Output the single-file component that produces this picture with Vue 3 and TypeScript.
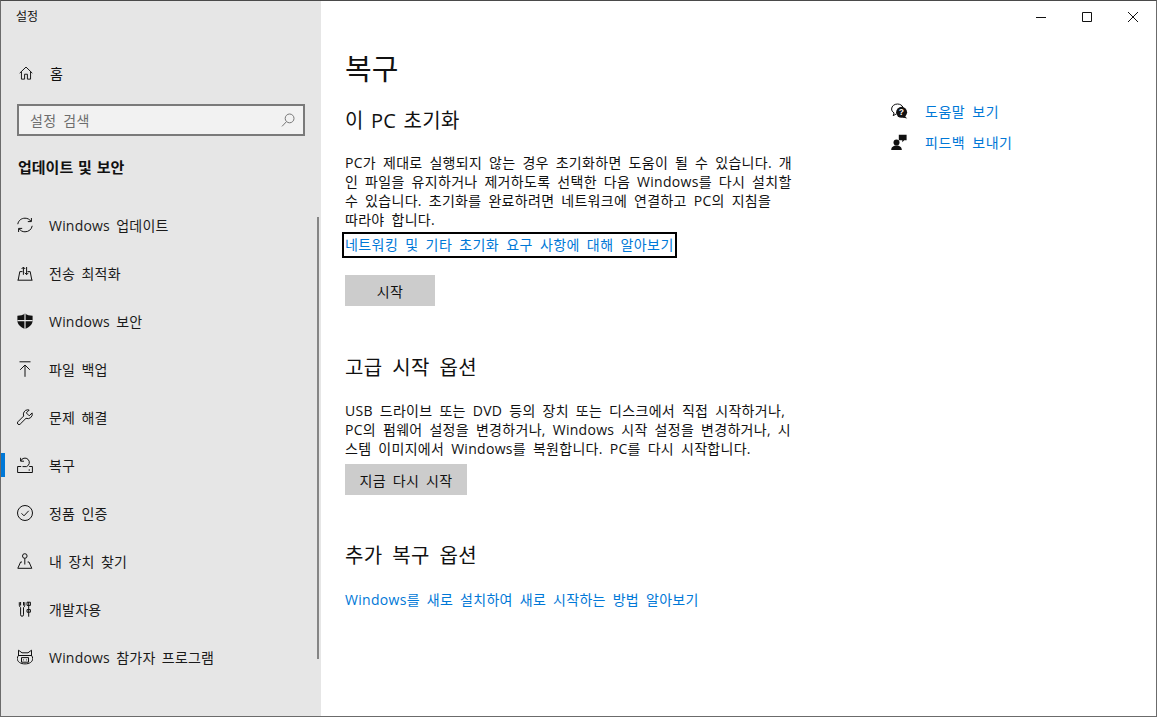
<script setup lang="ts">
interface NavItem { label: string; icon: string; active?: boolean }
const nav: NavItem[] = [
  { label: 'Windows 업데이트', icon: 'update' },
  { label: '전송 최적화', icon: 'delivery' },
  { label: 'Windows 보안', icon: 'shield' },
  { label: '파일 백업', icon: 'backup' },
  { label: '문제 해결', icon: 'wrench' },
  { label: '복구', icon: 'recovery', active: true },
  { label: '정품 인증', icon: 'check' },
  { label: '내 장치 찾기', icon: 'find' },
  { label: '개발자용', icon: 'dev' },
  { label: 'Windows 참가자 프로그램', icon: 'cat' },
]
const para1 = [
  'PC가 제대로 실행되지 않는 경우 초기화하면 도움이 될 수 있습니다. 개',
  '인 파일을 유지하거나 제거하도록 선택한 다음 Windows를 다시 설치할',
  '수 있습니다. 초기화를 완료하려면 네트워크에 연결하고 PC의 지침을',
  '따라야 합니다.',
]
const para2 = [
  'USB 드라이브 또는 DVD 등의 장치 또는 디스크에서 직접 시작하거나,',
  'PC의 펌웨어 설정을 변경하거나, Windows 시작 설정을 변경하거나, 시',
  '스템 이미지에서 Windows를 복원합니다. PC를 다시 시작합니다.',
]
</script>

<template>
  <div class="window">
    <aside class="sidebar">
      <div class="app-title">설정</div>
      <div class="home">
        <svg class="home-ico" viewBox="0 0 16 16" fill="none" stroke="#111" stroke-width="1.100">
          <path d="M.8 8.200 8 1.200l7.200 7M2.800 6.600v8.400h3.600V9.400h3.200V15h3.600V6.600" />
        </svg>
        <span class="home-label">홈</span>
      </div>
      <div class="search">
        <span class="search-text">설정 검색</span>
        <svg class="search-ico" viewBox="0 0 14 14" fill="none" stroke="#777" stroke-width="1">
          <circle cx="8.600" cy="5.400" r="4.400" />
          <path d="M5.500 8.600 1 13.400" />
        </svg>
      </div>
      <div class="group">업데이트 및 보안</div>
      <nav class="nav">
        <div v-for="item in nav" :key="item.label" class="nav-item">
          <span v-if="item.active" class="marker"></span>
          <svg class="ico" viewBox="0 0 16 16" fill="none" stroke="#111" stroke-width="1">
            <template v-if="item.icon === 'update'">
              <path d="M.8 7.200C1.300 3.600 4.300 1.200 8 1.200c2.500 0 4.600 1.100 5.900 3" />
              <path d="M15.200 8.800c-.5 3.600-3.500 6-7.200 6-2.500 0-4.600-1.100-5.900-3" />
              <path d="M14.400 1v3.600h-3.600M1.600 15v-3.600h3.600" />
            </template>
            <template v-else-if="item.icon === 'delivery'">
              <path d="M.5 15.200h15M1.200 15l1.600-8.400h2.700M10.500 6.600h2.700l1.600 8.400" />
              <path d="M6.400 9.800V2.200M4.600 4l1.800-1.900L8.200 4M9.600 2v7.600M7.800 7.800l1.800 1.900 1.800-1.900" />
            </template>
            <template v-else-if="item.icon === 'shield'">
              <path fill="#111" stroke="none" d="M8 .4c2 1.400 4.600 2.200 7.600 2.300v5c0 3.700-3.100 6.500-7.600 8.300C3.500 14.200.4 11.400.4 7.700v-5C3.400 2.600 6 1.800 8 .4Z" />
              <path stroke="#e6e6e6" stroke-width="1.200" d="M8 .4V16M.4 7.600h15.200" />
            </template>
            <template v-else-if="item.icon === 'backup'">
              <path d="M2.500 .8h11M8 15.800V4M3.200 8.800 8 4l4.800 4.800" />
            </template>
            <template v-else-if="item.icon === 'wrench'">
              <path d="M10.700.8a4.500 4.500 0 0 0-4 6.200L.9 12.800a1.600 1.600 0 0 0 2.300 2.300L9 9.300a4.500 4.500 0 0 0 6.100-5.400l-2.900 2.900-2.900-2.900 2.900-2.900a4.500 4.500 0 0 0-1.500-.2Z" />
            </template>
            <template v-else-if="item.icon === 'recovery'">
              <path d="M.6 9.500v6h14.800v-6h-3.200M.6 9.500h3.600M11.600 13H13" />
              <path d="M3.600 .8v3.400H7M3.800 4A4.400 4.400 0 1 1 9.500 9.600H5.500" />
            </template>
            <template v-else-if="item.icon === 'check'">
              <circle cx="8" cy="8" r="7.500" />
              <path d="M4.500 8.300 7 10.800l4.700-5" />
            </template>
            <template v-else-if="item.icon === 'find'">
              <circle cx="7.800" cy="3" r="2.300" />
              <path d="M7.800 5.300v6.200M5 9H3.600L.8 15.300h14L12 9h-1.400" />
            </template>
            <template v-else-if="item.icon === 'dev'">
              <path d="M2.300 1.200v3c0 1.200.7 2 1.300 2.300v7.300a1.400 1.400 0 0 0 2.900 0V6.500c.7-.3 1.300-1.100 1.300-2.300v-3M3.600 1v3.500M6.500 1v3.500" />
              <path d="M11.700 1v14.700M10 1.200h3.400v3.200H10zM10 8.600h3.400v2.600H10z" />
            </template>
            <template v-else>
              <path d="M1.500 1.200 5 3.800h6l3.500-2.600v5.200c.8 1 1.200 2 1.200 3.200 0 3.300-3.300 5.300-7.700 5.300S.3 12.900.3 9.600c0-1.200.4-2.200 1.200-3.200Z" />
              <path d="M4.500 8.600h7v4.600h-7zM6 10.900h.8M9.200 10.900h.8M1 6.500h14" />
            </template>
          </svg>
          <span class="nav-label">{{ item.label }}</span>
        </div>
      </nav>
      <span class="scroll-thumb"></span>
    </aside>

    <main class="main">
      <div class="win-controls">
        <svg viewBox="0 0 10 10" fill="none" stroke="#111" stroke-width="1"><path d="M0 5.500h10" /></svg>
        <svg viewBox="0 0 10 10" fill="none" stroke="#111" stroke-width="1"><path d="M.5.500h9v9h-9z" /></svg>
        <svg viewBox="0 0 10 10" fill="none" stroke="#111" stroke-width="1"><path d="m0 0 10 10M10 0 0 10" /></svg>
      </div>
      <div class="columns">
        <section class="content">
          <h1 class="page-title">복구</h1>
          <h2 class="heading first">이 PC 초기화</h2>
          <p class="para p1"><span v-for="l in para1" :key="l" class="line">{{ l }}</span></p>
          <a class="link focused">네트워킹 및 기타 초기화 요구 사항에 대해 알아보기</a>
          <button class="btn start">시작</button>
          <h2 class="heading second">고급 시작 옵션</h2>
          <p class="para p2"><span v-for="l in para2" :key="l" class="line">{{ l }}</span></p>
          <button class="btn restart">지금 다시 시작</button>
          <h2 class="heading third">추가 복구 옵션</h2>
          <a class="link fresh">Windows를 새로 설치하여 새로 시작하는 방법 알아보기</a>
        </section>
        <section class="help">
          <div class="help-row">
            <svg class="help-ico" viewBox="0 0 17 16">
              <path fill="none" stroke="#111" stroke-width="1" d="M5.500 10.800 2.200 12.700l.9-2.800C1.400 8.900.6 7.500.6 6 .6 3.100 3.300 1 6.500 1c2.500 0 4.700 1.300 5.500 3.300" />
              <circle cx="10.600" cy="9.300" r="5.500" fill="#111" />
              <path fill="#111" d="m13.500 13 2.800 2.500-5-1Z" />
              <text x="10.600" y="12.300" font-size="8.500" font-weight="700" text-anchor="middle" fill="#fff" font-family="Liberation Sans, sans-serif">?</text>
            </svg>
            <a class="help-link">도움말 보기</a>
          </div>
          <div class="help-row">
            <svg class="help-ico" viewBox="0 0 17 16">
              <circle cx="5.500" cy="8.600" r="3" fill="#111" />
              <path fill="#111" d="M.2 16c0-2.800 2.200-4.400 5.300-4.400s5.300 1.600 5.300 4.400Z" />
              <path fill="#111" d="M7.800.8h7.800v5.400h-2.400l-1.900 2V6.200H7.800Z" />
            </svg>
            <a class="help-link">피드백 보내기</a>
          </div>
        </section>
      </div>
    </main>
  </div>
</template>

<style scoped>
.window {
  box-sizing: border-box;
  width: 1157px;
  height: 717px;
  display: flex;
  border: 1px solid #6b6b6b;
  border-top-color: #4a4a4a;
  background: #fff;
  color: #111;
  font-family: "Open Sans", "Noto Sans CJK KR", sans-serif;
  font-size: 14px;
  letter-spacing: 0.3px;
  word-spacing: 3px;
  overflow: hidden;
}
.sidebar {
  position: relative;
  width: 320px;
  flex: none;
  background: #e6e6e6;
}
.app-title {
  font-size: 12px;
  line-height: 16px;
  letter-spacing: 0;
  margin: 8px 0 0 15px;
}
.home {
  display: flex;
  align-items: center;
  height: 24px;
  margin-top: 36px;
  padding-left: 18px;
}
.home-ico {
  width: 14px;
  height: 14px;
  flex: none;
}
.ico {
  width: 16px;
  height: 16px;
  flex: none;
}
.home-label {
  margin-left: 17px;
}
.search {
  box-sizing: border-box;
  display: flex;
  align-items: center;
  justify-content: space-between;
  width: 288px;
  height: 32px;
  margin: 19px 0 0 16px;
  padding: 0 8px 0 11px;
  background: #f2f2f2;
  border: 2px solid #7a7a7a;
  color: #6d6d6d;
}
.search-ico {
  width: 14px;
  height: 14px;
}
.group {
  font-size: 15px;
  font-weight: 700;
  line-height: 22px;
  letter-spacing: 0;
  word-spacing: 1px;
  margin: 20px 0 0 17px;
}
.nav {
  margin-top: 23px;
}
.nav-item {
  position: relative;
  display: flex;
  align-items: center;
  height: 48px;
  padding-left: 16px;
}
.nav-label {
  margin-left: 16px;
  color: #1a1a1a;
  white-space: nowrap;
  letter-spacing: 0.2px;
  word-spacing: 2.500px;
}
.marker {
  position: absolute;
  left: 0;
  top: 12px;
  width: 4px;
  height: 24px;
  background: #0078d7;
}
.scroll-thumb {
  position: absolute;
  left: 316px;
  top: 216px;
  width: 2px;
  height: 442px;
  background: #858585;
}
.main {
  position: relative;
  flex: 1;
  min-width: 0;
}
.win-controls {
  position: absolute;
  top: 11px;
  right: 18px;
  display: flex;
  gap: 36px;
}
.win-controls svg {
  width: 10px;
  height: 10px;
}
.columns {
  display: flex;
}
.content {
  width: 545px;
  flex: none;
  padding-left: 24px;
}
.page-title {
  font-size: 29px;
  font-weight: 400;
  line-height: 40px;
  letter-spacing: 0;
  margin: 48px 0 0;
}
.heading {
  font-size: 20px;
  font-weight: 400;
  line-height: 28px;
  letter-spacing: 0.4px;
  word-spacing: 4px;
  margin: 0;
}
.heading.first {
  margin-top: 18px;
  word-spacing: 1.500px;
}
.heading.second { margin-top: 48px; }
.heading.third { margin-top: 47px; }
.para {
  margin: 0;
  line-height: 19px;
  color: #111;
}
.p1 { margin-top: 18px; }
.p2 { margin-top: 19px; }
.line {
  display: block;
  white-space: nowrap;
}
.link {
  display: block;
  color: #0078d7;
  line-height: 20px;
  white-space: nowrap;
}
.focused {
  box-sizing: border-box;
  width: 335px;
  height: 26px;
  margin: 3px 0 0 -3px;
  padding-left: 1px;
  border: 2px solid #000;
  line-height: 22px;
  letter-spacing: 0.420px;
}
.fresh { margin-top: 20px; }
.btn {
  display: block;
  height: 31px;
  padding: 0;
  border: 0;
  background: #ccc;
  color: #111;
  font: inherit;
  letter-spacing: inherit;
  word-spacing: inherit;
}
.start {
  width: 90px;
  margin-top: 17px;
}
.restart {
  width: 122px;
  margin-top: 6px;
}
.help {
  padding: 94px 0 0 1px;
}
.help-row {
  display: flex;
  align-items: center;
  height: 31px;
}
.help-ico {
  width: 17px;
  height: 16px;
  flex: none;
}
.help-link {
  margin-left: 17px;
  color: #0078d7;
  white-space: nowrap;
  letter-spacing: 0.500px;
}
</style>
